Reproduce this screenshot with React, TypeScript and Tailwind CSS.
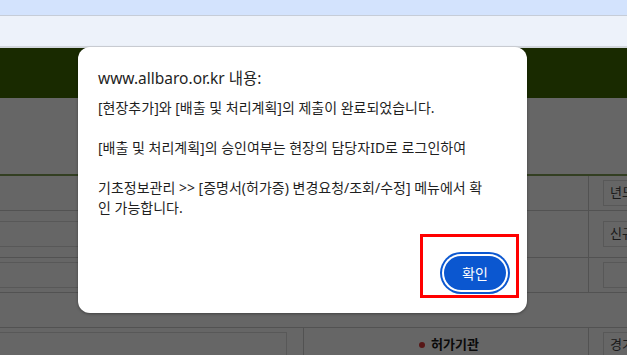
const FONT = { fontFamily: '"Noto Sans", "Noto Sans CJK KR", sans-serif' };

const Field = ({ text, className = "" }: { text?: string; className?: string }) => (
  <div
    className={
      "flex h-[26px] shrink-0 items-center overflow-hidden whitespace-nowrap border border-[#dcdcdc] bg-white px-[6px] text-[13px] text-[#444] " +
      className
    }
  >
    {text}
  </div>
);

const Row = ({
  height,
  left,
  middle,
  right,
  plain,
}: {
  height: string;
  left?: React.ReactNode;
  middle?: React.ReactNode;
  right?: React.ReactNode;
  plain?: boolean;
}) => (
  <div className={"flex border-b border-[#cccccc] " + height}>
    {plain ? null : (
      <>
        <div className="flex w-[303px] shrink-0 items-center pr-[16px]">{left}</div>
        <div className="flex w-[285px] shrink-0 items-center justify-center border-l border-[#cccccc]">
          {middle}
        </div>
        <div className="flex min-w-0 flex-1 items-center overflow-hidden border-l border-[#cccccc] pl-[14px]">
          {right}
        </div>
      </>
    )}
  </div>
);

export default function App() {
  return (
    <div className="relative h-[355px] w-[627px] overflow-hidden bg-white" style={FONT}>
      {/* browser chrome */}
      <div className="h-[16px] border-b border-[#c6cdd8] bg-[#d3e3fd]" />
      <div className="h-[32px] border-b-2 border-[#d2d6dc] bg-[#edf2fa]" />

      {/* page under the dimming scrim */}
      <div className="relative">
        <div className="h-[50px] bg-[#3f6a00]" />
        <div className="h-[78px] border-b-2 border-[#7f9e55] bg-white" />
        <Row height="h-[35px]" right={<Field text="년도선택" className="w-[80px]" />} />
        <Row
          height="h-[47px]"
          left={<Field className="w-full border-l-0" />}
          right={<Field text="신규" className="w-[80px]" />}
        />
        <Row
          height="h-[35px]"
          left={<Field className="w-full border-l-0 bg-[#f0f0f0]" />}
          right={<Field className="w-[80px]" />}
        />
        <Row height="h-[35px]" plain />
        <Row
          height="h-[35px]"
          left={<Field className="w-full border-l-0" />}
          middle={
            <div className="ml-[6px] flex items-center gap-[6px] text-[13px] font-bold text-[#1a1a1a]">
              <span className="h-[6px] w-[6px] rounded-full bg-[#d93a3a]" />
              허가기관
            </div>
          }
          right={<Field text="경기도" className="w-[80px]" />}
        />
        <div className="absolute inset-0 bg-black/60" />
      </div>

      {/* alert dialog */}
      <div className="absolute left-[78px] top-[47px] flex h-[266px] w-[449px] flex-col rounded-[12px] bg-white px-[20px] pb-[23px] pt-[20px] text-[#1f1f1f] shadow-[0_1px_3px_rgba(0,0,0,0.35)]">
        <div className="text-[15.5px] leading-[22px]">www.allbaro.or.kr 내용:</div>
        <div className="mt-[9px] whitespace-nowrap text-[14px] leading-[20px]">
          <div>[현장추가]와 [배출 및 처리계획]의 제출이 완료되었습니다.</div>
          <div>&nbsp;</div>
          <div>[배출 및 처리계획]의 승인여부는 현장의 담당자ID로 로그인하여</div>
          <div>&nbsp;</div>
          <div>기초정보관리 &gt;&gt; [증명서(허가증) 변경요청/조회/수정] 메뉴에서 확</div>
          <div>인 가능합니다.</div>
        </div>
        <div className="mt-auto flex justify-end pr-[1px]">
          <button className="h-[34px] w-[62px] rounded-full bg-[#0b57d0] text-[14px] font-normal text-white ring-2 ring-[#0b57d0] ring-offset-2 ring-offset-white">
            확인
          </button>
        </div>
      </div>

      {/* red highlight box */}
      <div className="absolute left-[420px] top-[234px] h-[64px] w-[99px] border-[3px] border-[#ff0000]" />
    </div>
  );
}
